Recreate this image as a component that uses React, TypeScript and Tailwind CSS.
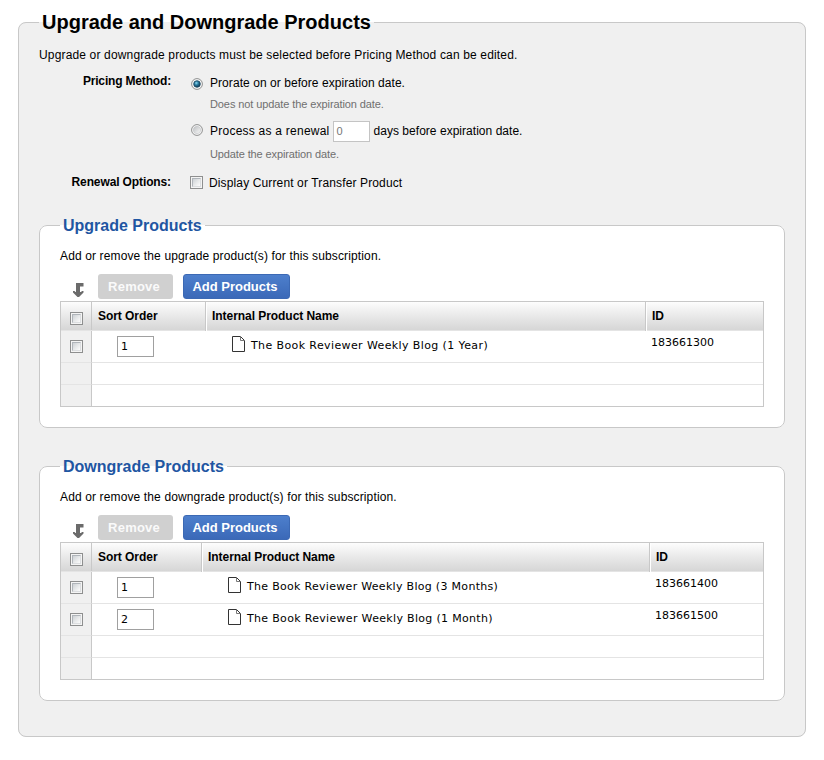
import React from "react";

type Product = { order: string; name: string; id: string; spacing: string };

function Checkbox() {
  return (
    <span className="box-border block h-[13px] w-[13px] shrink-0 border border-[#8e8f8f] bg-[#f4f4f4] p-px">
      <span className="block h-full w-full border border-[#b0b5ba] border-r-[#dcdee0] border-b-[#dcdee0] bg-linear-to-br from-[#cdd1d5] via-[#e6e8e9] to-[#fcfcfc]" />
    </span>
  );
}

function Radio({ checked }: { checked?: boolean }) {
  return (
    <svg width="12" height="12" viewBox="0 0 12 12" className="block shrink-0">
      <defs>
        <radialGradient id="dot" cx="0.4" cy="0.35" r="0.65">
          <stop offset="0" stopColor="#8fdcf2" />
          <stop offset="0.45" stopColor="#2c7ea3" />
          <stop offset="1" stopColor="#0b3550" />
        </radialGradient>
        <linearGradient id="well" x1="0" y1="0" x2="1" y2="1">
          <stop offset="0" stopColor="#bcbfc1" />
          <stop offset="1" stopColor="#fafafa" />
        </linearGradient>
      </defs>
      <circle cx="6" cy="6" r="5.4" fill="#f8f8f8" stroke="#8e8f8f" strokeWidth="1" />
      {checked ? (
        <circle cx="6" cy="6" r="3.3" fill="url(#dot)" stroke="#1c4761" strokeWidth="0.8" />
      ) : (
        <circle cx="6" cy="6" r="3.7" fill="url(#well)" stroke="#c3c5c7" strokeWidth="0.6" />
      )}
    </svg>
  );
}

function TurnArrow() {
  return (
    <svg width="11" height="14" viewBox="0 0 11 14" className="block">
      <path d="M3 0H10.500V3.500H7V9H8L9 8H10.500V9.500L6 14H4.500L0 9.500V8H1.500L2.500 9H3Z" fill="#6b6b6b" />
    </svg>
  );
}

function PageIcon() {
  return (
    <svg width="13" height="16" viewBox="0 0 13 16" className="block shrink-0">
      <path d="M0.500 0.500H8.500L12.500 4.500V15.500H0.500Z" fill="#fff" stroke="#333" />
      <path d="M8.500 0.500V4.500H12.500" fill="none" stroke="#777" />
    </svg>
  );
}

function HeadCell({ width, first, children }: { width: string; first?: boolean; children: React.ReactNode }) {
  return (
    <div className={`${width} ${first ? "" : "border-l border-l-white"} box-border h-[29px] pt-[6px] leading-4 font-bold tracking-[-0.05px]`}>
      <span className={first ? "pl-[6px]" : "pl-[5px]"}>{children}</span>
    </div>
  );
}

function ProductPanel({
  title,
  note,
  sortWidth,
  nameWidth,
  className,
  products,
}: {
  title: string;
  note: string;
  sortWidth: string;
  nameWidth: string;
  className: string;
  products: Product[];
}) {
  return (
    <fieldset className={`${className} box-border w-[746px] rounded-[8px] border border-[#c8c8c8] bg-white px-5`}>
      <legend className="h-[21px] px-[3px] text-[16px] leading-[21px] font-bold whitespace-nowrap text-[#1f56a2]">
        {title}
      </legend>
      <p className="mt-3 h-4 leading-4 tracking-[0.13px] whitespace-nowrap">{note}</p>
      <div className="mt-[10px] flex h-[25px] text-[13px] leading-[25px] font-bold text-white">
        <div className="w-[38px] pt-[9px] pl-[13px]">
          <TurnArrow />
        </div>
        <button className="h-[25px] w-[75px] rounded-[3px] bg-[#d0d0d0] pr-[3px] text-center tracking-[0.2px] text-[#fafafa]">
          Remove
        </button>
        <button className="ml-[10px] h-[25px] w-[107px] rounded-[3px] border border-[#3c69b4] bg-linear-to-b from-[#4d7fcc] to-[#3b69b8] pr-[3px] text-center leading-[23px]">
          Add Products
        </button>
      </div>
      <div className="mt-[2px] box-border w-[704px] border border-[#c8c8c8] bg-white">
        <div className="flex h-[29px] border-b border-[#e4e4e4] bg-linear-to-b from-[#fdfdfd] via-[#e9e9e9] via-50% to-[#d6d6d6]">
          <div className="box-border w-[31px] border-r border-[#c8c8c8] pt-[10px] pl-[9px]">
            <Checkbox />
          </div>
          <HeadCell width={`${sortWidth} border-r border-r-[#c8c8c8]`} first>
            Sort Order
          </HeadCell>
          <HeadCell width={`${nameWidth} border-r border-r-[#c8c8c8]`}>Internal Product Name</HeadCell>
          <HeadCell width="flex-1">ID</HeadCell>
        </div>
        {products.map((p) => (
          <div key={p.id} className="flex h-8 font-['DejaVu_Sans',sans-serif] text-[11px]">
            <div className="box-border w-[31px] border-r border-b border-r-[#c8c8c8] border-b-[#e4e4e4] bg-[#f0f0f0] pt-[9px] pl-[9px]">
              <Checkbox />
            </div>
            <div className="flex flex-1 border-b border-[#e4e4e4]">
              <div className={`${sortWidth} pt-[5px] pl-[25px]`}>
                <div className="box-border h-[21px] w-[37px] border border-[#a0a0a0] bg-white pl-[3px] leading-[19px]">{p.order}</div>
              </div>
              <div className={`${nameWidth} flex pt-[5px] pl-[26px]`}>
                <PageIcon />
                <span className={`${p.spacing} pl-[6px] leading-[20px] whitespace-nowrap`}>{p.name}</span>
              </div>
              <div className="pt-1 pl-[5px] leading-4">{p.id}</div>
            </div>
          </div>
        ))}
        <div className="flex h-[22px]">
          <div className="box-border w-[31px] border-r border-b border-r-[#c8c8c8] border-b-[#e4e4e4] bg-[#f0f0f0]" />
          <div className="flex-1 border-b border-[#e4e4e4]" />
        </div>
        <div className="flex h-[21px]">
          <div className="box-border w-[31px] border-r border-[#c8c8c8] bg-[#f0f0f0]" />
        </div>
      </div>
    </fieldset>
  );
}

export default function App() {
  return (
    <main className="flow-root h-[760px] w-[824px] overflow-hidden bg-white font-['Liberation_Sans',Arial,sans-serif] text-[12px] text-black">
      <fieldset className="mt-3 ml-[18px] box-border h-[725px] w-[788px] rounded-[8px] border border-[#c8c8c8] bg-[#f0f0f0] px-5">
        <legend className="h-[21px] px-[3px] text-[20px] leading-[21px] font-bold whitespace-nowrap">
          Upgrade and Downgrade Products
        </legend>
        <p className="mt-[14px] h-4 leading-4 tracking-[0.155px] whitespace-nowrap">
          Upgrade or downgrade products must be selected before Pricing Method can be edited.
        </p>

        <div className="flex h-[101px] pt-[10px]">
          <div className="w-[132px] text-right leading-4 font-bold tracking-[-0.17px]">Pricing Method:</div>
          <div className="pl-5">
            <label className="mt-[2px] flex h-4 items-center leading-4">
              <span className="pt-px">
                <Radio checked />
              </span>
              <span className="pl-[7px] tracking-[0.06px] whitespace-nowrap">Prorate on or before expiration date.</span>
            </label>
            <p className="mt-[5px] h-4 pl-[19px] text-[11px] leading-4 tracking-[-0.1px] text-[#6f6f6f]">
              Does not update the expiration date.
            </p>
            <label className="mt-[9px] flex h-[21px] items-start leading-[20px]">
              <span className="pt-[3px]">
                <Radio />
              </span>
              <span className="pl-[7px] leading-[21px] tracking-[0.24px] whitespace-nowrap">Process as a renewal</span>
              <span className="ml-[3px] box-border h-[21px] w-[37px] border border-[#c4c4c4] bg-white pl-[3px] text-[11px] leading-[19px] text-[#777]">
                0
              </span>
              <span className="pl-1 leading-[21px] tracking-[0.03px] whitespace-nowrap">days before expiration date.</span>
            </label>
            <p className="mt-1 h-4 pl-[19px] text-[11px] leading-4 tracking-[-0.12px] text-[#6f6f6f]">
              Update the expiration date.
            </p>
          </div>
        </div>

        <div className="flex h-[51px] pt-[10px] leading-4">
          <div className="w-[132px] text-right font-bold tracking-[-0.12px]">Renewal Options:</div>
          <label className="flex h-[18px] pl-[19px] leading-[18px]">
            <span className="pt-[2px]">
              <Checkbox />
            </span>
            <span className="pl-[6px] tracking-[0.13px] whitespace-nowrap">Display Current or Transfer Product</span>
          </label>
        </div>

        <ProductPanel
          title="Upgrade Products"
          note="Add or remove the upgrade product(s) for this subscription."
          sortWidth="w-[114px]"
          nameWidth="w-[440px]"
          className="h-[213px]"
          products={[
            { order: "1", name: "The Book Reviewer Weekly Blog (1 Year)", id: "183661300", spacing: "tracking-[0.39px]" },
          ]}
        />
        <ProductPanel
          title="Downgrade Products"
          note="Add or remove the downgrade product(s) for this subscription."
          sortWidth="w-[110px]"
          nameWidth="w-[448px]"
          className="mt-[28px] h-[245px]"
          products={[
            { order: "1", name: "The Book Reviewer Weekly Blog (3 Months)", id: "183661400", spacing: "tracking-[0.3px]" },
            { order: "2", name: "The Book Reviewer Weekly Blog (1 Month)", id: "183661500", spacing: "tracking-[0.32px]" },
          ]}
        />
      </fieldset>
    </main>
  );
}
